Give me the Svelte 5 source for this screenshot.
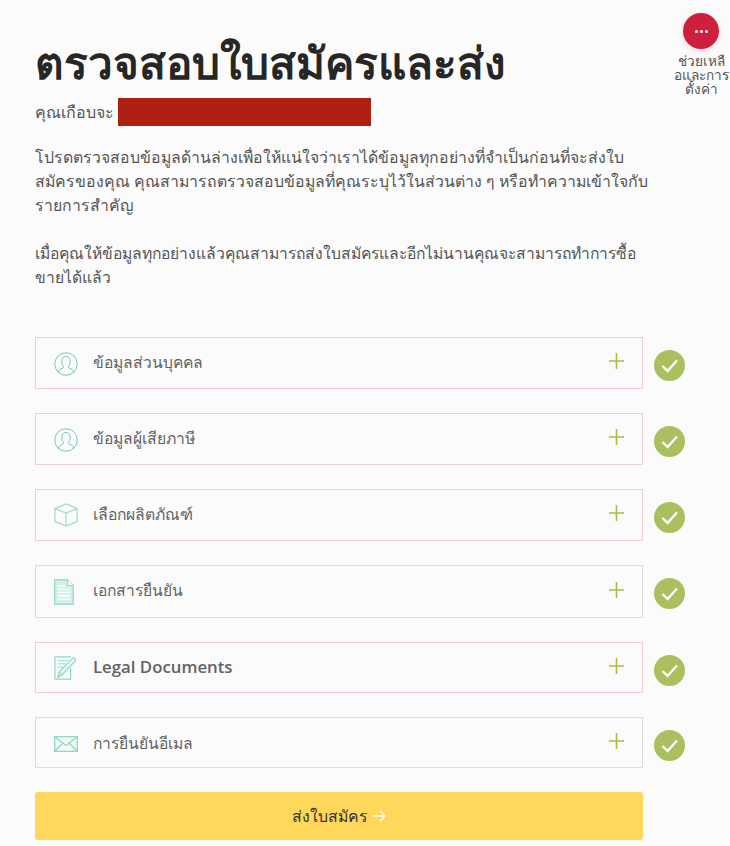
<script>
  const rows = [
    { label: 'ข้อมูลส่วนบุคคล', icon: 'person', tone: 'pink', size: 'h52', nudge: 'up' },
    { label: 'ข้อมูลผู้เสียภาษี', icon: 'person', tone: 'pink', size: 'h52', nudge: 'up' },
    { label: 'เลือกผลิตภัณฑ์', icon: 'box', tone: 'pink', size: 'h52', nudge: 'up' },
    { label: 'เอกสารยืนยัน', icon: 'doc', tone: 'grey', size: 'h53', nudge: 'up' },
    { label: 'Legal Documents', icon: 'pen', tone: 'pink', size: 'h51', nudge: 'up latin' },
    { label: 'การยืนยันอีเมล', icon: 'mail', tone: 'grey', size: 'h51', nudge: 'down' }
  ];
</script>

<div class="page">
  <aside class="help">
    <div class="bubble"><span></span><span></span><span></span></div>
    <div class="help-text">ช่วยเหลื<br />อและการ<br />ตั้งค่า</div>
  </aside>

  <main class="content">
    <h1>ตรวจสอบใบสมัครและส่ง</h1>
    <div class="almost">
      <span>คุณเกือบจะ</span>
      <span class="redacted"></span>
    </div>
    <p class="first">โปรดตรวจสอบข้อมูลด้านล่างเพื่อให้แน่ใจว่าเราได้ข้อมูลทุกอย่างที่จำเป็นก่อนที่จะส่งใบ<br />สมัครของคุณ คุณสามารถตรวจสอบข้อมูลที่คุณระบุไว้ในส่วนต่าง ๆ หรือทำความเข้าใจกับ<br />รายการสำคัญ</p>
    <p class="second">เมื่อคุณให้ข้อมูลทุกอย่างแล้วคุณสามารถส่งใบสมัครและอีกไม่นานคุณจะสามารถทำการซื้อ<br />ขายได้แล้ว</p>

    <div class="rows">
      {#each rows as row}
        <div class="line">
          <div class="row {row.tone} {row.size}">
            <div class="icon {row.icon}">
              {#if row.icon === 'person'}
                <svg width="24" height="24" viewBox="0 0 26 26" fill="none" stroke="#6fc6b4" stroke-width="1.050">
                  <circle cx="13" cy="13" r="12.200" />
                  <path d="M4.600 22.200c.6-2.800 2.200-3.800 4.200-4.400 1.300-.4 1.700-1 1.500-2-.9-1-1.900-3-1.900-5.800C8.400 7 10.400 4.800 13 4.800s4.600 2.200 4.600 5.200c0 2.800-1 4.800-1.900 5.800-.2 1 .2 1.600 1.500 2 2 .6 3.600 1.600 4.200 4.400" />
                </svg>
              {:else if row.icon === 'box'}
                <svg width="24" height="24" viewBox="0 0 26 26" fill="none" stroke="#a6dccf" stroke-width="1.400">
                  <path d="M13 1 25 6v14l-12 5-12-5V6z" />
                  <path d="M1 6l12 5 12-5M13 11v14" />
                </svg>
              {:else if row.icon === 'doc'}
                <svg width="20" height="26" viewBox="0 0 21 27" fill="none" stroke="#93d6c6" stroke-width="1.200">
                  <path d="M.7.700h13.500l6 6v19.600H.7z" fill="#d5efe9" />
                  <path d="M14.200.700v6h6" fill="#fff" />
                  <path d="M4 7h8M4 10.500h13M4 14h13M4 17.500h13M4 21h13" stroke="#fff" stroke-width="1.500" />
                </svg>
              {:else if row.icon === 'pen'}
                <svg width="24" height="24" viewBox="0 0 26 26" fill="none" stroke="#93d6c6" stroke-width="1.300">
                  <path d="M18 1H1v24h17V13" />
                  <path d="M4 5h12M4 8.500h9M4 12h6" stroke-width="1" />
                  <path d="M4 23l1.500-5.500L20 2.500c1.500-1.500 4.500 1.500 3 3L8.500 20.500z" fill="#e6f6f2" />
                  <path d="M5.500 17.500l3 3" />
                </svg>
              {:else}
                <svg width="24" height="16" viewBox="0 0 24 16" fill="none" stroke="#93d6c6" stroke-width="1.300">
                  <path d="M.7.700h22.600v14.600H.7z" fill="#eff9f6" />
                  <path d="M.7.700 12 9.500 23.300.700M.7 15.300l8.500-8.500M23.300 15.300l-8.500-8.500" />
                </svg>
              {/if}
            </div>
            <span class="label {row.nudge}">{row.label}</span>
            <svg class="plus" width="15" height="16" viewBox="0 0 15 16" stroke="#a3c04a" stroke-width="1.600">
              <path d="M7.500 0v16M0 8h15" />
            </svg>
          </div>
          <svg class="check" width="31" height="31" viewBox="0 0 31 31" fill="none">
            <circle cx="15.500" cy="15.500" r="15.500" fill="#aabf5e" />
            <path d="M8.500 16l5 5L23 10.500" stroke="#fff" stroke-width="2.400" />
          </svg>
        </div>
      {/each}
    </div>

    <button class="submit" type="button">
      ส่งใบสมัคร
      <svg width="15" height="14" viewBox="0 0 16 14" fill="none" stroke="#fff" stroke-width="1.500">
        <path d="M1 7h13M8.500 1.500 14 7l-5.500 5.500" />
      </svg>
    </button>
  </main>
</div>

<style>
  :global(body) {
    margin: 0;
    background: #fbfbfb;
    overflow: hidden;
  }
  .page {
    position: relative;
    height: 846px;
    overflow: hidden;
    font-family: "Open Sans", "Noto Sans", sans-serif;
    color: #555;
  }
  .help {
    position: absolute;
    top: 13px;
    right: 0;
    width: 58px;
    display: flex;
    flex-direction: column;
    align-items: center;
  }
  .bubble {
    width: 36px;
    height: 36px;
    border-radius: 50%;
    background: #d01f3d;
    box-shadow: 0 2px 6px rgba(0, 0, 0, 0.12);
    display: flex;
    align-items: center;
    justify-content: center;
    gap: 2px;
  }
  .bubble span {
    width: 3px;
    height: 3px;
    border-radius: 50%;
    background: #fff;
  }
  .help-text {
    margin-top: 5px;
    font-size: 13.6px;
    line-height: 14px;
    text-align: center;
    color: #555;
    white-space: nowrap;
  }
  .content {
    width: 608px;
    padding: 36px 0 0 35px;
  }
  h1 {
    margin: 0;
    font-size: 44px;
    line-height: 52px;
    font-weight: 700;
    color: #262626;
  }
  .almost {
    display: flex;
    align-items: center;
    gap: 4px;
    margin-top: 10px;
    height: 28px;
    font-size: 16px;
    color: #555;
  }
  .redacted {
    width: 253px;
    height: 28px;
    background: #ae2012;
  }
  p {
    margin: 0;
    font-size: 15.85px;
    line-height: 24px;
    color: #555;
    white-space: nowrap;
  }
  .first {
    margin-top: 19px;
  }
  .second {
    margin-top: 24px;
    font-size: 15.7px;
  }
  .rows {
    margin-top: 48px;
    display: flex;
    flex-direction: column;
    gap: 24px;
  }
  .line {
    position: relative;
    width: 608px;
  }
  .row {
    box-sizing: border-box;
    display: flex;
    align-items: center;
    padding: 0 18px;
  }
  .pink {
    border: 1px solid #f3cdd3;
  }
  .grey {
    border: 1px solid #f3cdd3;
    border-right-color: #ddd;
    border-top-color: #ddd;
    border-bottom-color: #ddd;
  }
  .h52 { height: 52px; }
  .h53 { height: 53px; }
  .h51 { height: 51px; }
  .icon {
    width: 26px;
    height: 28px;
    display: flex;
    align-items: center;
    justify-content: flex-start;
    margin-right: 13px;
  }
  .icon.person {
    padding-top: 2px;
    box-sizing: border-box;
  }
  .icon.mail {
    padding-top: 3px;
    box-sizing: border-box;
  }
  .label {
    flex: 1;
    font-size: 15.7px;
    font-weight: 400;
    color: #636363;
  }
  .up {
    padding-bottom: 2px;
  }
  .down {
    padding-top: 2px;
  }
  .latin {
    font-size: 16.8px;
    font-weight: 600;
  }
  .plus {
    margin-bottom: 4px;
  }
  .check {
    position: absolute;
    left: 619px;
    top: 13px;
  }
  .submit {
    display: flex;
    align-items: center;
    justify-content: center;
    gap: 5px;
    width: 608px;
    height: 48px;
    margin-top: 24px;
    border: 0;
    border-radius: 3px;
    background: #ffd75a;
    font: inherit;
    font-size: 15.8px;
    color: #333;
  }
</style>
